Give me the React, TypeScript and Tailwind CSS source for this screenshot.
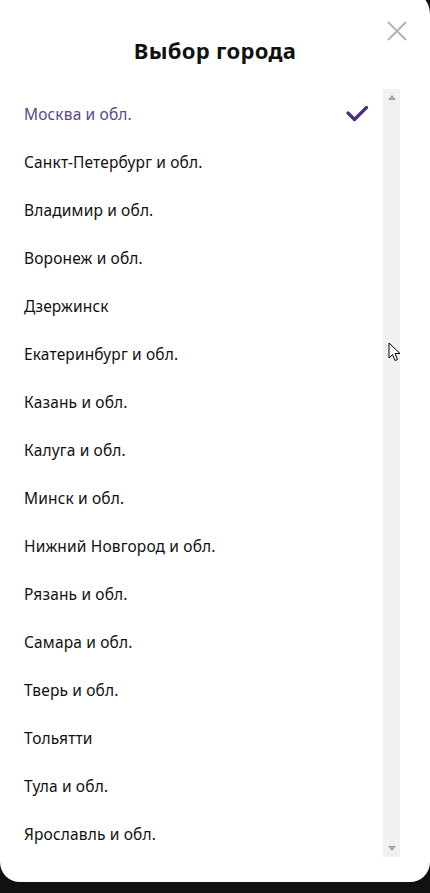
import React from "react";

const cities = [
  "Москва и обл.",
  "Санкт-Петербург и обл.",
  "Владимир и обл.",
  "Воронеж и обл.",
  "Дзержинск",
  "Екатеринбург и обл.",
  "Казань и обл.",
  "Калуга и обл.",
  "Минск и обл.",
  "Нижний Новгород и обл.",
  "Рязань и обл.",
  "Самара и обл.",
  "Тверь и обл.",
  "Тольятти",
  "Тула и обл.",
  "Ярославль и обл.",
];

export default function App() {
  return (
    <div className="w-[430px] h-[893px] bg-[#111111] overflow-hidden" style={{ fontFamily: '"Noto Sans", "Open Sans", sans-serif' }}>
      <div className="relative -mt-[10px] h-[892px] bg-white rounded-tr-[24px] rounded-b-[20px] flex flex-col">
        <div className="h-[99px] flex items-start justify-center pt-[45px]">
          <h1 className="text-[22px] leading-[30px] font-bold tracking-[0.3px] text-[#111]">Выбор города</h1>
        </div>
        <button className="absolute right-[23px] top-[31px] w-[20px] h-[20px]" aria-label="close">
          <svg viewBox="0 0 20 20" width="20" height="20">
            <path d="M1 1 L19 19 M19 1 L1 19" stroke="#b3b3b3" strokeWidth="2" fill="none" />
          </svg>
        </button>
        <div className="flex">
          <ul className="flex-1 pl-[24px] pr-[13px]">
            {cities.map((c, i) => (
              <li key={c} className="h-[48px] flex items-center justify-between">
                <span className={"pt-[3px] text-[15.5px] font-normal tracking-[0.15px] " + (i === 0 ? "text-[#5a4a87]" : "text-[#111]")}>{c}</span>
                {i === 0 && (
                  <svg width="24" height="18" viewBox="0 0 24 18" className="mr-[1px] mt-[2px]">
                    <path d="M3 8 L9.5 14.5 L21.5 2.5" stroke="#4b2d83" strokeWidth="3.2" fill="none" strokeLinecap="round" strokeLinejoin="round" />
                  </svg>
                )}
              </li>
            ))}
          </ul>
          <div className="relative w-[17px] mr-[30px] bg-[#f1f1f1] flex flex-col items-center justify-between py-[6px]">
            <svg width="8" height="5" viewBox="0 0 8 5"><path d="M0 5 L4 0 L8 5 Z" fill="#a3a3a3" /></svg>
            <svg width="8" height="5" viewBox="0 0 8 5"><path d="M0 0 L4 5 L8 0 Z" fill="#a3a3a3" /></svg>
            <svg className="absolute left-[5px] top-[253px]" width="13" height="20" viewBox="0 0 13 20">
              <path d="M1 1 L1 16 L4.5 12.5 L7 18.5 L9.5 17.5 L7 11.5 L12 11.5 Z" fill="white" stroke="black" strokeWidth="1" strokeLinejoin="round" />
            </svg>
          </div>
        </div>
      </div>
    </div>
  );
}
